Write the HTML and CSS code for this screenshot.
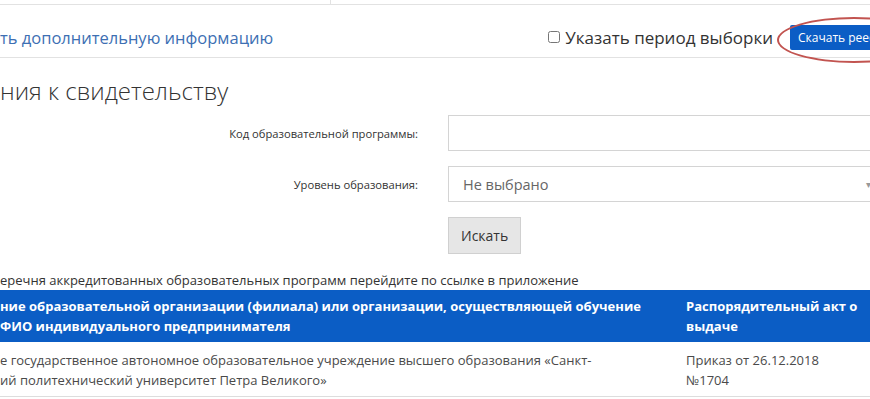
FILE: index.html
```html
<!doctype html>
<html>
  <head>
    <meta charset="UTF-8" />
    <title>Приложения к свидетельству</title>
    <link rel="stylesheet" href="styles.css">
  </head>
  <body>
    <div class="page">
      <div class="tabs">
        <div class="tab"></div>
      </div>

      <!-- Toolbar -->
      <div class="toolbar">
        <a class="more-link" href="#">ть дополнительную информацию</a>
        <div class="toolbar-right">
          <label class="period">
            <input type="checkbox" />
            Указать период выборки
          </label>
          <div class="download-wrap">
            <button class="primary">Скачать реестр</button>
            <span class="highlight"></span>
          </div>
        </div>
      </div>

      <h1 class="title">ния к свидетельству</h1>

      <!-- Search form -->
      <div class="search-form">
        <label class="field-label">Код образовательной программы:</label>
        <input class="field" type="text" />

        <label class="field-label">Уровень образования:</label>
        <div class="field select">
          <span>Не выбрано</span>
          <span class="caret">▾</span>
        </div>

        <div></div>
        <div><button class="secondary">Искать</button></div>
      </div>

      <p class="note">
        еречня аккредитованных образовательных программ перейдите по ссылке в приложение
      </p>

      <table class="results">
        <thead>
          <tr>
            <th class="col-org">
              ние образовательной организации (филиала) или организации, осуществляющей обучение<br />
              ФИО индивидуального предпринимателя
            </th>
            <th class="col-act">Распорядительный акт о<br />выдаче</th>
          </tr>
        </thead>
        <tbody>
          <tr>
            <td class="col-org">
              е государственное автономное образовательное учреждение высшего образования «Санкт-<br />
              ий политехнический университет Петра Великого»
            </td>
            <td class="col-act">Приказ от 26.12.2018<br />№1704</td>
          </tr>
        </tbody>
      </table>
    </div>
  </body>
</html>
```

FILE: styles.css
```css
body {
  font-family: "Open Sans", "Liberation Sans", sans-serif;
  margin: 0;
  padding: 0;
  background-color: #fff;
  color: #333;
  overflow: hidden;
}

.page {
  width: 1000px;
}

.tabs {
  height: 4px;
  border-bottom: 1px solid #e2e2e2;
}

.tab {
  width: 330px;
  height: 4px;
  border-right: 1px solid #e2e2e2;
}

.toolbar {
  display: flex;
  align-items: center;
  height: 40px;
  padding-top: 12px;
  border-bottom: 1px solid #e2e2e2;
}

.more-link {
  font-size: 16.5px;
  color: #3d6fb3;
  text-decoration: none;
}

.toolbar-right {
  margin-left: auto;
  display: flex;
  align-items: center;
  gap: 17px;
}

.period {
  display: flex;
  align-items: center;
  gap: 5px;
  font-size: 17px;
  color: #333;
}

.period input {
  margin: 0;
  width: 12px;
  height: 12px;
}

.download-wrap {
  position: relative;
}

button {
  font-family: "Open Sans", "Liberation Sans", sans-serif;
  cursor: pointer;
}

button.primary {
  width: 210px;
  height: 25px;
  padding: 0 8px;
  text-align: left;
  border: none;
  border-radius: 2px;
  background-color: #0b5dc5;
  color: white;
  font-size: 12px;
}

.highlight {
  position: absolute;
  left: -13px;
  top: -8px;
  width: 150px;
  height: 42px;
  border: 2px solid #c25450;
  border-radius: 50%;
}

.title {
  margin: 18px 0 0;
  font-size: 24px;
  font-weight: 300;
  color: #333;
  line-height: 30px;
}

.search-form {
  display: grid;
  grid-template-columns: 418px 500px;
  column-gap: 30px;
  row-gap: 15px;
  align-items: center;
  margin-top: 9px;
}

.field-label {
  text-align: right;
  font-size: 11.2px;
  color: #333;
}

.field {
  box-sizing: border-box;
  height: 36px;
  border: 1px solid #d4d4d4;
  margin: 0;
  font-size: 14.5px;
}

.select {
  display: flex;
  align-items: center;
  padding: 0 14px;
  color: #666;
}

.caret {
  margin-left: auto;
  font-size: 10px;
  color: #999;
  margin-right: 62px;
}

button.secondary {
  height: 37px;
  padding: 0 12px;
  border: 1px solid #d0d0d0;
  background-color: #e6e6e6;
  color: #333;
  font-size: 14px;
}

.note {
  margin: 17px 0 0;
  font-size: 13px;
  line-height: 18px;
  color: #333;
}

.results {
  border-collapse: collapse;
  margin-top: 1px;
  width: 1000px;
  font-size: 13px;
  line-height: 20px;
}

.results th {
  background-color: #0b5dc5;
  color: white;
  font-weight: 700;
  text-align: left;
  padding: 6px 0;
  vertical-align: top;
}

.results td {
  color: #4a4a4a;
  padding: 8px 0 6px;
  vertical-align: top;
  border-bottom: 1px solid #ddd;
}

.results .col-org {
  width: 670px;
}

.results .col-act {
  padding-left: 16px;
}
```
